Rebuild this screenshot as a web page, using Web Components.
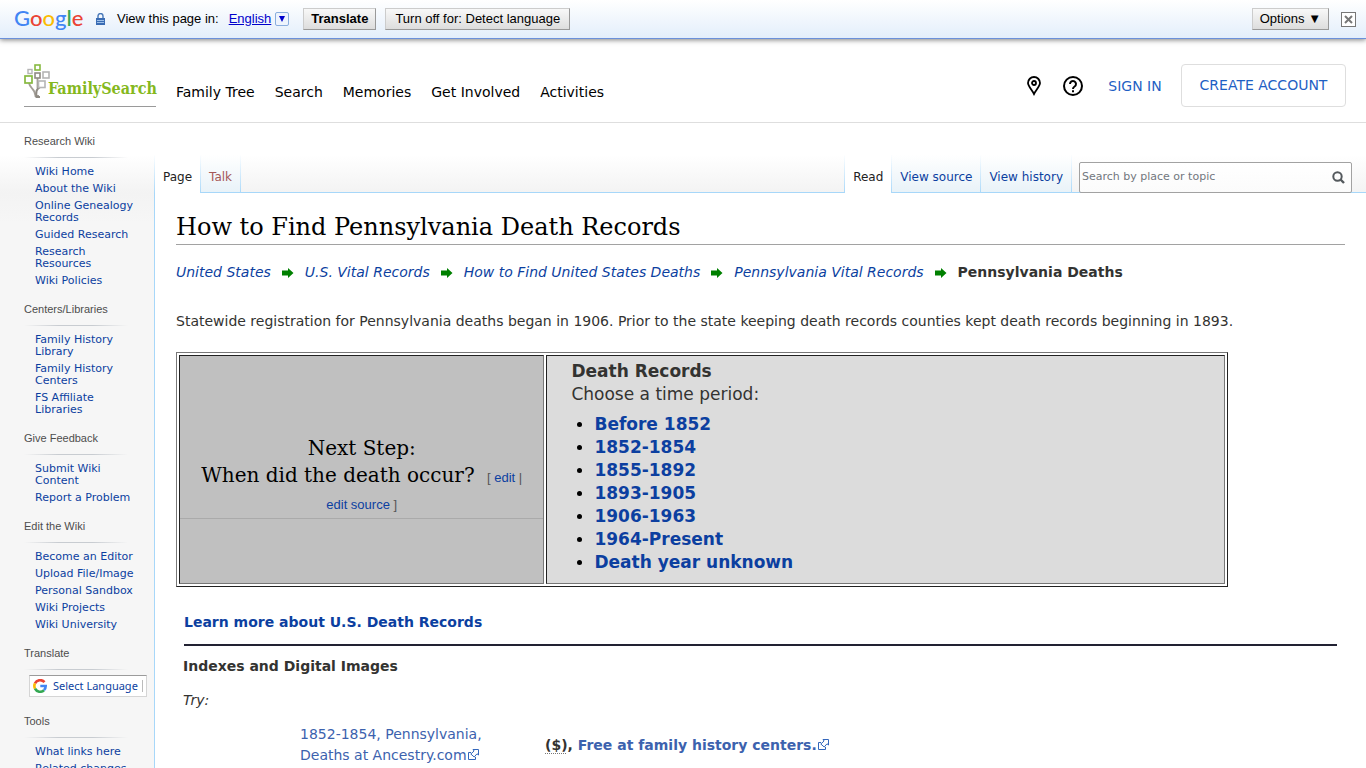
<!DOCTYPE html>
<html lang="en">
<head>
<meta charset="utf-8">
<title>How to Find Pennsylvania Death Records</title>
<style>
  html, body { margin: 0; background: #fff; }
  body { font-family: "DejaVu Sans", Verdana, sans-serif; font-size: 14px; color: #333331; overflow: hidden; height: 100vh; }
</style>
</head>
<body>
<wiki-page></wiki-page>

<script>
const define = (name, html) => {
  const tpl = document.createElement('template');
  tpl.innerHTML = html;
  customElements.define(name, class extends HTMLElement {
    constructor() {
      super();
      this.attachShadow({ mode: 'open' }).append(tpl.content.cloneNode(true));
    }
  });
};

/* Browser translation strip */
define('translate-bar', `
<style>
  :host { display: flex; align-items: center; box-sizing: border-box; height: 39px; padding: 0 10px 2px 14px;
    font: 13px "Liberation Sans", Arial, sans-serif; color: #000; position: relative;
    background: linear-gradient(#fff, #e3eefb); border-bottom: 1px solid #6b90da; box-shadow: 0 1px 5px rgba(0,0,0,.5); }
  .logo { font: 22px/26px Lato, sans-serif; font-weight: 500; width: 68px; margin-right: 14px; }
  .b { color: #4285f4 } .r { color: #ea4335 } .y { color: #fbbc05 } .g { color: #34a853 }
  svg { display: block; flex: none; }
  .lock { margin: 2px 12px 0 0; }
  .lang { color: #00c; margin: 0 4px 0 10px; }
  .drop { width: 14px; height: 14px; padding: 0; border: 1px solid #8aaede; border-radius: 2px; background: #eef4fd; display: grid; place-items: center; margin: 2px 14px 0 0; }
  .btn { font: inherit; color: #000; height: 22px; padding: 0 9px 1px; margin: 2px 9px 0 0; white-space: nowrap;
    border: 1px solid; border-color: #ccc #999 #999 #ccc; background: linear-gradient(#f8f8f8, #ddd); }
  .bold { font-weight: bold; padding: 0 7px 1px; }
  .options { margin-left: auto; margin-right: 12px; padding: 0 7px 1px; }
  .close { width: 15px; height: 15px; padding: 0; border: 1px solid #777; background: #fff; display: grid; place-items: center; margin: 2px 0 0; }
</style>
<span class="logo" aria-label="Google"><span class="b">G</span><span class="r">o</span><span class="y">o</span><span class="b">g</span><span class="g">l</span><span class="r">e</span></span>
<svg class="lock" width="9" height="12" viewBox="0 0 9 12"><path d="M2 6V3a2.5 2.5 0 0 1 5 0v3" fill="none" stroke="#4878b8" stroke-width="1.4"/><path d="M0 5h9v7H0z" fill="#3a6cb4"/><path d="M1 7.5h7M1 9.5h7" stroke="#9dbfe8"/></svg>
<span>View this page in:</span>
<a class="lang" href="#">English</a>
<button class="drop" aria-label="Choose language"><svg width="6" height="6"><path d="M0 0h6L3 6z" fill="#00c"/></svg></button>
<button class="btn bold">Translate</button>
<button class="btn">Turn off for: Detect language</button>
<button class="btn options">Options ▼</button>
<button class="close" aria-label="Close"><svg width="9" height="9"><path d="M1 1l7 7M8 1L1 8" stroke="#777" stroke-width="2"/></svg></button>
`);

define('family-logo', `
<style>
  :host { display: block; width: 132px; height: 42px; border-bottom: 1px solid #9a9a9a; }
  a { display: flex; align-items: flex-start; text-decoration: none; color: #85b81d; }
  svg { flex: none; display: block; }
  span { font: bold 16px/18px "DejaVu Serif Condensed", "DejaVu Serif", serif; margin: 16px 0 0 -2px; white-space: nowrap; }
</style>
<a href="#"><svg width="26" height="35" viewBox="0 0 26 35" fill="none">
  <path d="M5 19c1 6 6 5 6.500 13h3.500M13.500 14v10" stroke="#a39e97" stroke-width="1.8"/>
  <path d="M16 23c-4 2-4 5-3.500 10H16" stroke="#8f8a83" stroke-width="2"/>
  <rect x="11" y="1" width="5" height="5" stroke="#87b940" stroke-width="1.6"/>
  <rect x="4" y="5.5" width="4" height="4" stroke="#b5b5b5" stroke-width="1.4"/>
  <rect x="11" y="9" width="5" height="5" stroke="#8f8a83" stroke-width="1.6"/>
  <rect x="19" y="8" width="6" height="6" stroke="#b5b5b5" stroke-width="1.6"/>
  <rect x="1" y="12" width="7" height="7" fill="#fff" stroke="#87b940" stroke-width="1.7"/>
  <rect x="14.5" y="17" width="6.500" height="6.500" fill="#fff" stroke="#b5b5b5" stroke-width="1.6"/>
</svg><span>FamilySearch</span></a>
`);

define('site-header', `
<style>
  :host { display: flex; align-items: center; box-sizing: border-box; height: 84px; padding: 10px 20px 0 24px; border-bottom: 1px solid #dedede; }
  nav { display: flex; gap: 20px; margin: 12px 0 0 20px; }
  a { text-decoration: none; color: #000; white-space: nowrap; }
  .tools { display: flex; align-items: center; margin-left: auto; }
  svg { display: block; }
  .pin { margin-right: 22px; }
  .help { margin-right: 22px; }
  .sign, .create { color: #1f5fc4; }
  .sign { min-width: 60px; text-align: center; }
  .create { box-sizing: border-box; min-width: 165px; height: 43px; line-height: 41px; text-align: center; margin-left: 16px; border: 1px solid #dedede; border-radius: 4px; }
</style>
<family-logo></family-logo>
<nav><a href="#">Family Tree</a><a href="#">Search</a><a href="#">Memories</a><a href="#">Get Involved</a><a href="#">Activities</a></nav>
<div class="tools">
  <a class="pin" href="#" aria-label="Locations"><svg width="14" height="20" viewBox="0 0 14 20" fill="none" stroke="#000"><path d="M7 18C5 14 1 10 1 7a6 6 0 0 1 12 0c0 3-4 7-6 11z" stroke-width="1.8"/><circle cx="7" cy="7" r="2" stroke-width="1.8"/></svg></a>
  <a class="help" href="#" aria-label="Help"><svg width="20" height="20" viewBox="0 0 20 20" fill="none" stroke="#000" stroke-width="2"><circle cx="10" cy="10" r="9"/><path d="M7 8a3 3 0 1 1 4.600 2.500C10.500 11.200 10 11.600 10 13M10 14.200v2"/></svg></a>
  <a class="sign" href="#">SIGN IN</a>
  <a class="create" href="#">CREATE ACCOUNT</a>
</div>
`);

define('nav-item', `
<style>
  :host { display: block; padding-bottom: 5px; font-size: 11px; line-height: 12px; }
  a { color: #0c3fa0; text-decoration: none; }
</style>
<a href="#"><slot></slot></a>
`);

define('nav-section', `
<style>
  :host { display: block; margin-bottom: 8px; }
  h3 { margin: 0; font: 11px/18px "Liberation Sans", Arial, sans-serif; color: #4d4d4d; padding: 0 0 8px 24px;
    background: linear-gradient(90deg, transparent, #c8ccd1 33%, #c8ccd1 66%, transparent) 24px 25px / 104px 1px no-repeat; }
  div { padding: 8px 20px 0 35px; }
</style>
<h3><slot name="heading"></slot></h3><div><slot></slot></div>
`);

define('language-picker', `
<style>
  :host { display: block; margin: -3px -13px 15px -6px; }
  a { display: flex; align-items: center; box-sizing: border-box; height: 22px; padding: 0 3px; border: 1px solid #d5d5d5; border-top-color: #9b9b9b; background: #fff; color: #0c3fa0; font: 11px/20px "Noto Sans", sans-serif; text-decoration: none; white-space: nowrap; }
  svg { margin-right: 6px; flex: none; }
  i { width: 1px; height: 12px; background: #bbb; margin-left: auto; }
</style>
<a href="#"><svg width="14" height="14" viewBox="0 0 14 14" fill="none" stroke-width="2.600">
<path d="M11.500 3.200A5.700 5.700 0 0 0 2 4.400" stroke="#ea4335"/><path d="M2 4.400a5.700 5.700 0 0 0 0 5.200" stroke="#fbbc05"/><path d="M2 9.600a5.700 5.700 0 0 0 9 1.600" stroke="#34a853"/><path d="M11 11.200C12.200 10 12.700 8.600 12.700 7H7.300" stroke="#4285f4"/></svg>Select Language<i></i></a>
`);

define('wiki-sidebar', `
<style>:host { display: block; padding-top: 9px; }</style>
<nav-section><span slot="heading">Research Wiki</span>
  <nav-item>Wiki Home</nav-item><nav-item>About the Wiki</nav-item><nav-item>Online Genealogy Records</nav-item><nav-item>Guided Research</nav-item><nav-item>Research<br>Resources</nav-item><nav-item>Wiki Policies</nav-item></nav-section>
<nav-section><span slot="heading">Centers/Libraries</span>
  <nav-item>Family History Library</nav-item><nav-item>Family History Centers</nav-item><nav-item>FS Affiliate Libraries</nav-item></nav-section>
<nav-section><span slot="heading">Give Feedback</span>
  <nav-item>Submit Wiki Content</nav-item><nav-item>Report a Problem</nav-item></nav-section>
<nav-section><span slot="heading">Edit the Wiki</span>
  <nav-item>Become an Editor</nav-item><nav-item>Upload File/Image</nav-item><nav-item>Personal Sandbox</nav-item><nav-item>Wiki Projects</nav-item><nav-item>Wiki University</nav-item></nav-section>
<nav-section><span slot="heading">Translate</span><language-picker></language-picker></nav-section>
<nav-section><span slot="heading">Tools</span>
  <nav-item>What links here</nav-item><nav-item>Related changes</nav-item></nav-section>
`);

define('wiki-tab', `
<style>
  :host { display: block; box-sizing: border-box; height: 38px; font-size: 12px; border-right: 1px solid; border-image: linear-gradient(#fff, #a7d7f9) 1;
    border-left-width: 0; background: linear-gradient(#fff, #e8f2f8); box-shadow: inset 0 -1px #a7d7f9; }
  :host([selected]) { background: #fff; box-shadow: none; }
  a { display: block; padding: 0 8px; line-height: 44px; height: 37px; color: #0c3fa0; text-decoration: none; white-space: nowrap; }
  :host([selected]) a { color: #222; }
  :host([missing]) a { color: #a55858; }
</style>
<a href="#"><slot></slot></a>
`);

define('wiki-search', `
<style>
  :host { display: block; width: 273px; }
  form { display: flex; align-items: center; box-sizing: border-box; height: 31px; border: 1px solid #a2a2a2; border-radius: 2px; background: linear-gradient(#fff, #fbfbfb); }
  input { flex: 1; min-width: 0; border: 0; background: none; padding: 0 2px 2px; font: 11px "DejaVu Sans", Verdana, sans-serif; outline: 0; }
  input::placeholder { color: #72777d; opacity: 1; }
  button { border: 0; background: none; padding: 0; margin-right: 6px; }
  svg { display: block; }
</style>
<form><input type="text" aria-label="Search" placeholder="Search by place or topic"><button type="button" aria-label="Go"><svg width="13" height="13" viewBox="0 0 13 13" fill="none" stroke="#54595d"><circle cx="5.500" cy="5.500" r="4.200" stroke-width="2"/><path d="M8.500 8.500l3.500 3.500" stroke-width="2.400"/></svg></button></form>
`);

define('wiki-toolbar', `
<style>
  :host { display: flex; align-items: flex-end; height: 70px; padding-right: 14px; box-shadow: inset 0 -1px #a7d7f9; }
  .group { display: flex; border-left: 1px solid; border-image: linear-gradient(#fff, #a7d7f9) 1; }
  .views { margin-left: auto; margin-right: 7px; }
</style>
<div class="group"><wiki-tab selected>Page</wiki-tab><wiki-tab missing>Talk</wiki-tab></div>
<div class="group views"><wiki-tab selected>Read</wiki-tab><wiki-tab>View source</wiki-tab><wiki-tab>View history</wiki-tab></div>
<wiki-search></wiki-search>
`);

define('crumb-arrow', `
<style>:host { display: block; } svg { display: block; }</style>
<svg width="12" height="10"><path d="M0 2.500h6V0l5.500 5L6 10V7.500H0z" fill="#008000"/></svg>
`);

define('external-link', `
<style>
  :host { display: inline; }
  a { color: #3c62ae; text-decoration: none; }
  svg { margin-left: 1px; }
</style>
<a href="#"><slot></slot><svg width="11" height="11" viewBox="0 0 11 11" fill="#fff" stroke="#3366bb"><path d="M3 3.500H.5v7h7V8"/><path d="M5 .5h5.500V6L9 4.800 6.200 8 2.800 5l3.300-3z"/></svg></a>
`);

define('next-step', `
<style>
  :host { display: block; margin-top: 20px; }
  table { width: 90%; border: 1px outset #777; border-spacing: 2px; height: 235px; background: #fff; }
  td { border: 1px inset #777; padding: 0; }
  .step { width: 35%; background: #c0c0c0; text-align: center; }
  h2 { margin: 0; padding: 15px 15px 2px; font: 20px/27px "DejaVu Serif", serif; color: #000; border-bottom: 1px solid #aaa; }
  .edit { font: 13px/20px "Liberation Sans", Arial, sans-serif; color: #555; margin-left: 6px; }
  a { color: #0c3fa0; text-decoration: none; }
  .edit a { white-space: nowrap; }
  .periods { background: #dcdcdc; padding: 4px 24px; vertical-align: top; font-size: 17px; line-height: 23px; }
  p { margin: 0; }
  ul { margin: 7px 0 0; padding: 0 0 0 23px; font-weight: bold; }
  li::marker { color: #000; font-size: 16px; }
</style>
<table><tr>
<td class="step"><h2>Next Step:<br>When did the death occur? <span class="edit">[ <a href="#">edit</a> | <a href="#">edit source</a> ]</span></h2></td>
<td class="periods"><p><b>Death Records</b></p><p>Choose a time period:</p>
<ul><li><a href="#">Before 1852</a></li><li><a href="#">1852-1854</a></li><li><a href="#">1855-1892</a></li><li><a href="#">1893-1905</a></li><li><a href="#">1906-1963</a></li><li><a href="#">1964-Present</a></li><li><a href="#">Death year unknown</a></li></ul></td>
</tr></table>
`);

define('wiki-article', `
<style>
  :host { display: block; padding: 17px 21px; background: #fff; border-left: 1px solid #a7d7f9; line-height: 21px; }
  h1 { margin: 0; font: 24px/34px "DejaVu Serif", serif; color: #000; border-bottom: 1px solid #a2a2a2; }
  a { color: #0c3fa0; text-decoration: none; }
  .crumbs { display: flex; align-items: center; gap: 11px; margin-top: 17px; white-space: nowrap; }
  .intro { margin: 28px 0 0; }
  .more { margin: 25px 8px 0; padding-bottom: 11px; border-bottom: 2px solid #223; font-weight: bold; }
  h4 { margin: 10px 7px 0; font-size: 14px; }
  .try { margin: 13px 7px 0; font-style: italic; }
  .records { margin: 10px 0 0 122px; border-spacing: 2px; }
  .records td { padding: 1px 0; }
  .name { width: 243px; }
  abbr { text-decoration: underline dotted #777 1px; text-underline-offset: 3px; }
</style>
<h1>How to Find Pennsylvania Death Records</h1>
<div class="crumbs"><i><a href="#">United States</a></i><crumb-arrow></crumb-arrow><i><a href="#">U.S. Vital Records</a></i><crumb-arrow></crumb-arrow><i><a href="#">How to Find United States Deaths</a></i><crumb-arrow></crumb-arrow><i><a href="#">Pennsylvania Vital Records</a></i><crumb-arrow></crumb-arrow><b>Pennsylvania Deaths</b></div>
<p class="intro">Statewide registration for Pennsylvania deaths began in 1906. Prior to the state keeping death records counties kept death records beginning in 1893.</p>
<next-step></next-step>
<div class="more"><a href="#">Learn more about U.S. Death Records</a></div>
<h4>Indexes and Digital Images</h4>
<p class="try">Try:</p>
<table class="records"><tr><td class="name"><external-link>1852-1854, Pennsylvania,<br>Deaths at Ancestry.com</external-link></td><td><b><abbr title="Fee">($)</abbr>, <external-link>Free at family history centers.</external-link></b></td></tr></table>
`);

define('wiki-page', `
<style>
  :host { display: block; }
  .body { display: grid; grid-template-columns: 154px minmax(0, 1fr); background: #f6f6f6 linear-gradient(#fff 32px, #f3f3f3 70px, #f6f6f6 100px) no-repeat; }
</style>
<translate-bar></translate-bar>
<site-header></site-header>
<div class="body"><wiki-sidebar></wiki-sidebar><main><wiki-toolbar></wiki-toolbar><wiki-article></wiki-article></main></div>
`);
</script>
</body>
</html>
